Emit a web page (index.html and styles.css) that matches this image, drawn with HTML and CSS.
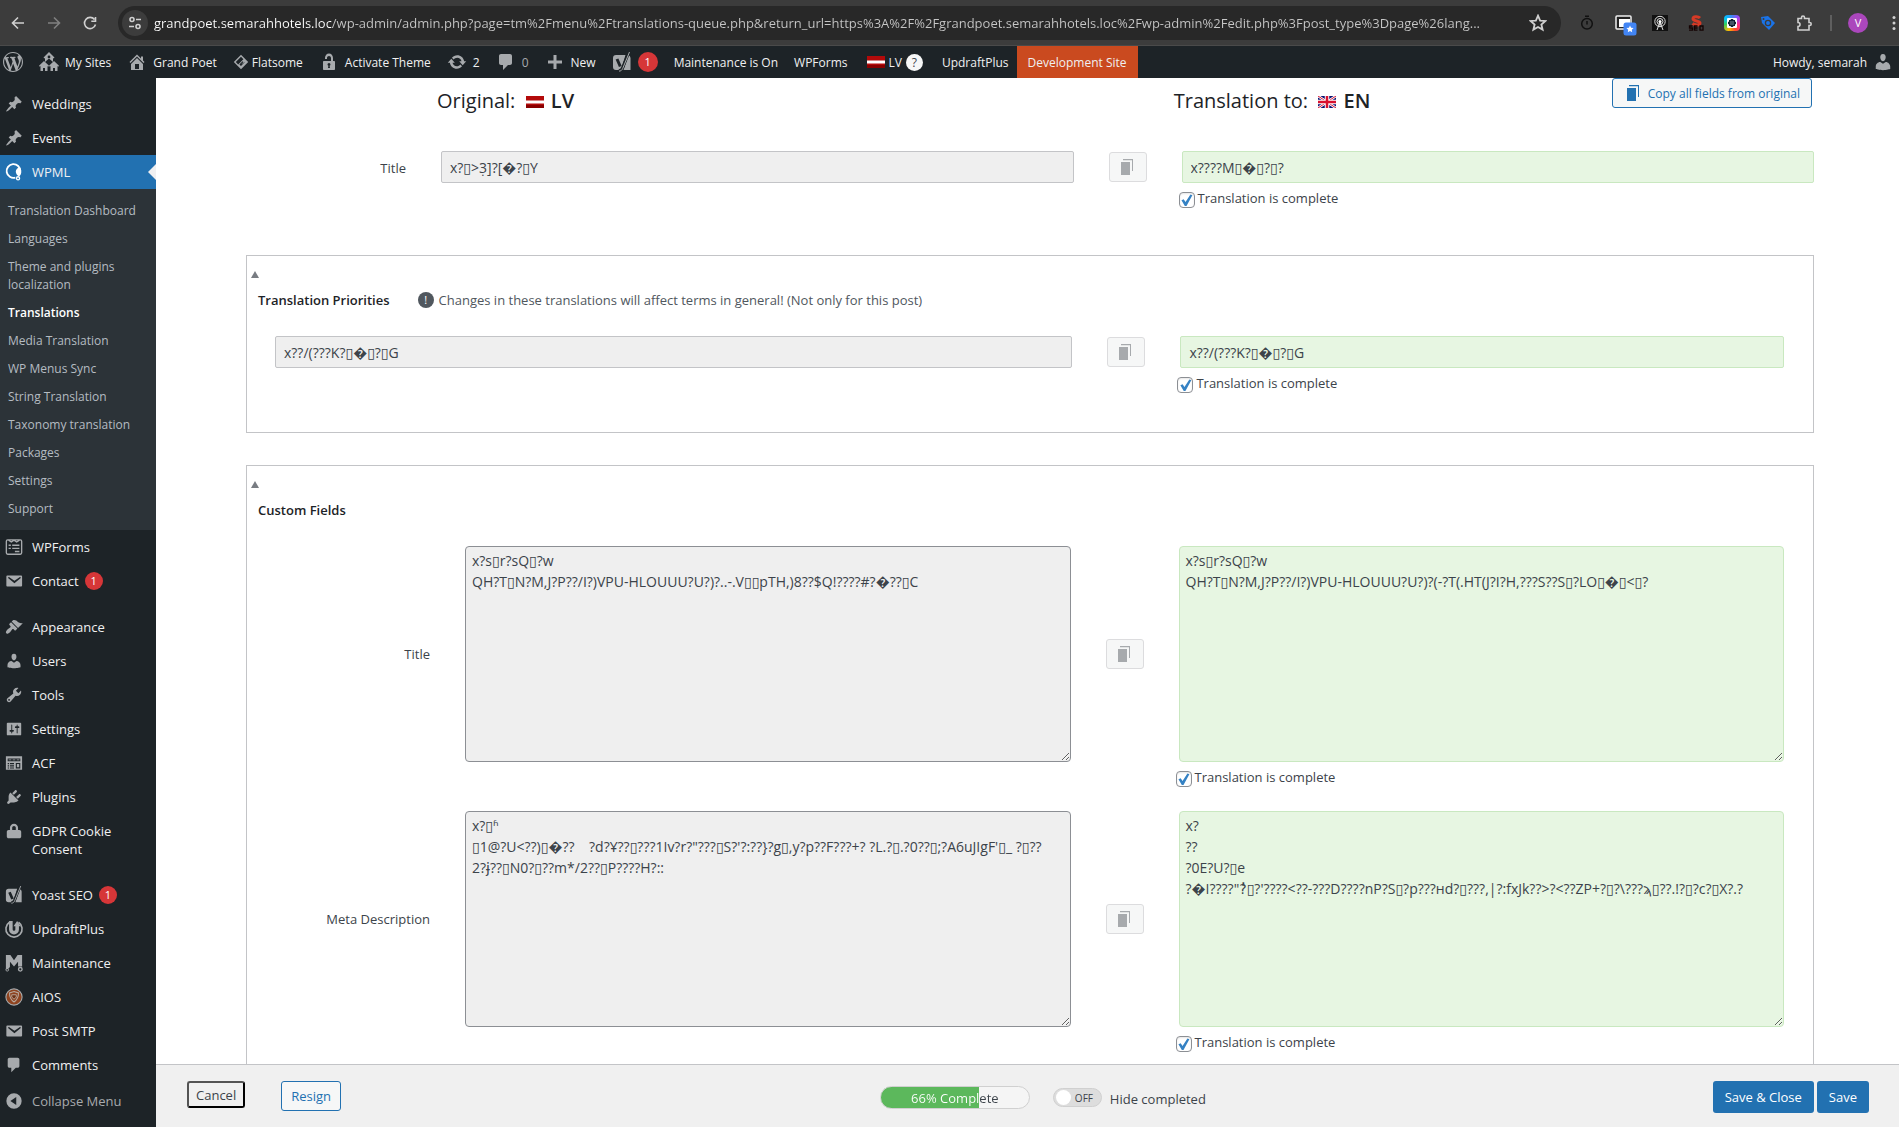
FILE: index.html
```html
<!DOCTYPE html>
<html lang="en">
<head>
    <meta charset="UTF-8">
    <meta name="viewport" content="width=device-width, initial-scale=1.0">
    <title>Translations</title>
    <link rel="stylesheet" href="styles.css">
</head>
<body>
    <svg class="sprite" aria-hidden="true">
        <symbol id="i-wp" viewBox="0 0 20 20"><path d="M20 10c0-5.51-4.49-10-10-10C4.48 0 0 4.49 0 10c0 5.52 4.48 10 10 10 5.51 0 10-4.48 10-10zM7.78 15.37L4.37 6.22c.55-.02 1.17-.08 1.17-.08.5-.06.44-1.13-.06-1.11 0 0-1.45.11-2.37.11-.18 0-.37 0-.58-.01C4.12 2.69 6.87 1.11 10 1.11c2.33 0 4.45.87 6.05 2.34-.68-.11-1.65.39-1.65 1.58 0 .74.45 1.36.9 2.1.35.61.55 1.36.55 2.46 0 1.49-1.4 5-1.4 5l-3.03-8.37c.54-.02.82-.17.82-.17.5-.05.44-1.25-.06-1.22 0 0-1.44.12-2.38.12-.87 0-2.33-.12-2.33-.12-.5-.03-.56 1.2-.06 1.22l.92.08 1.26 3.41zM17.41 10c.24-.64.74-1.87.43-4.25.7 1.29 1.05 2.71 1.05 4.25 0 3.29-1.73 6.24-4.4 7.78.97-2.59 1.94-5.2 2.92-7.78zM6.1 18.09C3.12 16.65 1.11 13.53 1.11 10c0-1.3.23-2.48.72-3.59C3.25 10.3 4.67 14.2 6.1 18.09zm4.03-6.63l2.58 6.98c-.86.29-1.76.45-2.71.45-.79 0-1.57-.11-2.29-.33.81-2.38 1.62-4.74 2.42-7.1z"/></symbol>
        <symbol id="i-sites" viewBox="0 0 20 20"><path fill-rule="evenodd" d="M10 0l5.500 5.500-1 1L14 6v4l-4-3.600L6 10V6l-.5.5-1-1zM10 3.500a1.400 1.400 0 1 0 0 2.800 1.400 1.400 0 0 0 0-2.800zM5 9l5 4.800-.9 1L8.500 14v5H6v-3H4v3H1.500v-5l-.7.8-.8-1zM15 9l5 4.800-.8 1-.7-.8v5H16v-3h-2v3h-2.500v-5l-.6.8-.9-1z"/></symbol>
        <symbol id="i-home" viewBox="0 0 20 20"><path fill-rule="evenodd" d="M16 8.500l1.530 1.530-1.060 1.060L10 4.600l-6.470 6.490-1.060-1.060L10 2.500l4 4v-2h2v4zm-6-2.460l6 5.990V18H4v-5.970zM12 17v-5H8v5h4z"/></symbol>
        <symbol id="i-unlock" viewBox="0 0 20 20"><path fill-rule="evenodd" d="M12 9V6c0-1.100-.9-2-2-2s-2 .9-2 2v1H6V6c0-2.500 1.790-4.500 4-4.500s4 2 4 4.500v3h1c.55 0 1 .45 1 1v7c0 .55-.45 1-1 1H5c-.55 0-1-.45-1-1v-7c0-.55.45-1 1-1zm-1 7l-.4-2.300c.6-.2.9-.7.9-1.200a1.500 1.500 0 0 0-3 0c0 .5.3 1 .9 1.200L9 16z"/></symbol>
        <symbol id="i-update" viewBox="0 0 20 20"><path d="M10.200 3.280c3.530 0 6.430 2.610 6.920 6h2.080l-3.500 4-3.500-4h2.320c-.45-1.970-2.210-3.450-4.320-3.450-1.450 0-2.730.71-3.540 1.780L4.950 5.660C6.230 4.200 8.110 3.280 10.200 3.280zm-.4 13.440c-3.520 0-6.430-2.610-6.920-6H.8l3.500-4c1.170 1.330 2.330 2.670 3.500 4H5.480c.45 1.970 2.210 3.450 4.320 3.450 1.450 0 2.730-.71 3.540-1.780l1.710 1.950c-1.280 1.460-3.150 2.380-5.250 2.380z"/></symbol>
        <symbol id="i-comment" viewBox="0 0 20 20"><path d="M5 2h9c1.100 0 2 .9 2 2v7c0 1.100-.9 2-2 2h-2l-5 5v-5H5c-1.100 0-2-.9-2-2V4c0-1.100.9-2 2-2z"/></symbol>
        <symbol id="i-plus" viewBox="0 0 20 20"><path d="M17 8.500v3h-5.500V17h-3v-5.500H3v-3h5.500V3h3v5.500z"/></symbol>
        <symbol id="i-flatsome" viewBox="0 0 20 20"><path d="M10 1l9 9-9 9-9-9zM10 3.500L3.500 10l3 3L13 6.500z" fill-rule="evenodd"/><path d="M10 13l3-3-1-1-4 4 2 2 5.500-5.500" fill="#1d2327"/></symbol>
        <symbol id="i-yoast" viewBox="0 0 20 20"><path d="M4 3h9.500L9 18H4a3 3 0 0 1-3-3V6a3 3 0 0 1 3-3zM16.500 3.300A3 3 0 0 1 18.500 6v12h-7z"/><path d="M5 7l3.300 7.500M17 0l-6.300 15.500c-.9 2.200-2 3.300-4 3.300" fill="none" stroke="#1d2327" stroke-width="3"/><path d="M17.500 0l-6.800 16.500c-.8 1.800-1.800 2.600-3.700 2.600" fill="none" stroke="currentColor" stroke-width="1"/></symbol>
        <symbol id="i-pin" viewBox="0 0 20 20"><path d="M10.440 3.020l1.820-1.820 6.360 6.350-1.830 1.820c-1.050-.68-2.480-.57-3.410.36l-.75.75c-.92.93-1.040 2.350-.35 3.410l-1.830 1.820-2.410-2.410-2.800 2.790c-.42.42-3.380 2.710-3.800 2.290s1.860-3.390 2.280-3.810l2.790-2.790L4.100 9.360l1.830-1.820c1.050.69 2.480.57 3.400-.36l.75-.75c.93-.92 1.050-2.350.36-3.410z"/></symbol>
        <symbol id="i-wpml" viewBox="0 0 20 20"><path fill="none" stroke="currentColor" stroke-width="2" d="M11.500 16.200A7.600 7.600 0 1 1 17 9"/><path d="M12 9.500c0-2.500 2-4.500 4.500-4.500 2.500 3.500 2 8-1 10-2-1-3.500-3-3.500-5.500z"/><circle cx="14.500" cy="17" r="1.700" fill="none" stroke="currentColor" stroke-width="1.500"/></symbol>
        <symbol id="i-wpforms" viewBox="0 0 20 20"><path fill="none" stroke="currentColor" stroke-width="1.500" d="M3 2h14a1.500 1.500 0 0 1 1.500 1.500v13A1.500 1.500 0 0 1 17 18H3a1.500 1.500 0 0 1-1.500-1.500v-13A1.500 1.500 0 0 1 3 2zM4 2.500l3 2 3-2 3 2 3-2M4 8h2.500M8 8h8M4 11.500h2.500M8 11.500h8M11 15h5"/></symbol>
        <symbol id="i-mail" viewBox="0 0 20 20"><path fill-rule="evenodd" d="M2.500 4H18c.6 0 1 .4 1 1v10c0 .6-.4 1-1 1H2.500c-.6 0-1-.4-1-1V5c0-.6.4-1 1-1zm7.990 8.600l6.740-5.530c.24-.2.43-.66.13-1.070-.29-.41-.82-.42-1.170-.17l-5.700 3.860L4.800 5.830c-.35-.25-.88-.24-1.170.17-.3.41-.11.87.13 1.070z"/></symbol>
        <symbol id="i-brush" viewBox="0 0 20 20"><path d="M14.480 11.060L7.410 3.990l1.500-1.500c.5-.56 2.300-.47 3.510.32 1.210.8 1.430 1.280 2.910 2.100 1.180.64 2.450 1.260 4.450.85zm-.71.71L6.700 4.700 4.930 6.470c-.39.39-.39 1.020 0 1.410l1.060 1.060c.39.39.39 1.030 0 1.420-.6.6-1.430 1.110-2.210 1.690-.35.26-.7.53-1.010.84C1.430 14.230.4 16.080 1.400 17.070c.99 1 2.840-.03 4.180-1.360.31-.31.58-.66.85-1.020.57-.78 1.080-1.610 1.690-2.210.39-.39 1.020-.39 1.410 0l1.060 1.060c.39.39 1.020.39 1.410 0z"/></symbol>
        <symbol id="i-user" viewBox="0 0 20 20"><path d="M10 9.250c-2.270 0-2.730-3.440-2.730-3.440C7 4.020 7.820 2 9.970 2c2.160 0 2.980 2.020 2.710 3.810 0 0-.41 3.440-2.680 3.440zm0 2.570L12.720 10c2.390 0 4.520 2.330 4.520 4.530v2.490s-3.650 1.130-7.240 1.130c-3.650 0-7.240-1.130-7.240-1.130v-2.490c0-2.250 1.940-4.480 4.470-4.480z"/></symbol>
        <symbol id="i-tools" viewBox="0 0 20 20"><path fill-rule="evenodd" d="M16.680 9.770c-1.340 1.340-3.300 1.670-4.950.99l-5.410 6.520c-.99.99-2.590.99-3.580 0s-.99-2.590 0-3.570l6.520-5.420c-.68-1.650-.35-3.610.99-4.950 1.280-1.280 3.120-1.620 4.720-1.060l-2.890 2.890 2.820 2.820 2.860-2.870c.53 1.580.18 3.390-1.080 4.650zM3.810 16.210c.4.39 1.040.39 1.430 0 .4-.4.4-1.040 0-1.430-.39-.4-1.030-.4-1.430 0-.39.39-.39 1.030 0 1.430z"/></symbol>
        <symbol id="i-settings" viewBox="0 0 20 20"><path fill-rule="evenodd" d="M18 16V4c0-.55-.45-1-1-1H3c-.55 0-1 .45-1 1v12c0 .55.45 1 1 1h14c.55 0 1-.45 1-1zM8 11h1c.55 0 1 .45 1 1s-.45 1-1 1H8v1.500c0 .28-.22.5-.5.5s-.5-.22-.5-.5V13H6c-.55 0-1-.45-1-1s.45-1 1-1h1V5.500c0-.28.22-.5.5-.5s.5.22.5.5V11zm5-2h-1c-.55 0-1-.45-1-1s.45-1 1-1h1V5.500c0-.28.22-.5.5-.5s.5.22.5.5V7h1c.55 0 1 .45 1 1s-.45 1-1 1h-1v5.500c0 .28-.22.5-.5.5s-.5-.22-.5-.5V9z"/></symbol>
        <symbol id="i-acf" viewBox="0 0 20 20"><path fill-rule="evenodd" d="M1 2.500h18v15H1zM3 5v3h14V5zM4 6h3v1H4zm4.500 0h3v1h-3zM13 6h3v1h-3zM3 10h1.500v1.500H3zm2.500 0H10v1.500H5.500zM3 12.500h1.500V14H3zm2.500 0H10V14H5.500zM3 15h1.500v1.200H3zm2.500 0H10v1.200H5.500zM12 10v6h5v-6zm1.200 1.200h2.600v3.600h-2.600z"/></symbol>
        <symbol id="i-plug" viewBox="0 0 20 20"><path d="M13.110 4.360L9.870 7.600 8 5.730l3.240-3.240c.35-.34 1.050-.2 1.560.32.52.51.66 1.210.31 1.550zm-8 1.770l.91-1.120 9.010 9.010-1.190.84c-.71.71-2.630 1.160-3.820 1.160H6.140L4.900 17.260c-.59.59-1.540.59-2.120 0-.59-.58-.59-1.530 0-2.120l1.240-1.240v-3.880c0-1.130.4-3.190 1.090-3.890zm7.260 3.970l3.240-3.240c.34-.35 1.040-.21 1.550.31.52.51.66 1.210.31 1.550l-3.240 3.250z"/></symbol>
        <symbol id="i-lock" viewBox="0 0 20 20"><path fill-rule="evenodd" d="M14.500 9H16c1.100 0 2 .9 2 2v5c0 1.100-.9 2-2 2H4c-1.100 0-2-.9-2-2v-5c0-1.100.9-2 2-2h1.500V6.500C5.500 4 7.500 2 10 2s4.500 2 4.500 4.500zM12 9V6.500c0-1.100-.9-2-2-2s-2 .9-2 2V9z"/></symbol>
        <symbol id="i-updraft" viewBox="0 0 20 20"><path fill="none" stroke="currentColor" stroke-width="1.800" d="M5 2.500a9 9 0 1 0 10 0"/><path fill="none" stroke="currentColor" stroke-width="4" d="M6.500 1v9.500a3.500 3.500 0 0 0 7 0V6"/><path d="M9.500 7l4-6 4 6z"/></symbol>
        <symbol id="i-maint" viewBox="0 0 20 20"><path d="M1 1h5l4 6 4-6h5v13h-4.500V8.500L10 14 5.500 8.500v6L3 17H1z"/><circle cx="2.500" cy="17.500" r="1.500" fill="none" stroke="currentColor"/><circle cx="17" cy="17" r="2" fill="none" stroke="currentColor" stroke-width="1.500"/></symbol>
        <symbol id="i-aios" viewBox="0 0 20 20"><circle cx="10" cy="10" r="9" fill="#8f4420" stroke="#a7aaad" stroke-width="1.200"/><path fill="none" stroke="#b9a99f" stroke-width="1.200" d="M10 4l5 1.500c0 5-1.500 7.500-5 10-3.500-2.500-5-5-5-10z"/><path fill="#6d3114" stroke="#b9a99f" d="M7.500 7.500h5v2.500L10 12.500 7.500 10z"/></symbol>
        <symbol id="i-collapse" viewBox="0 0 20 20"><path fill-rule="evenodd" d="M10 1.500a8.500 8.500 0 1 1 0 17 8.500 8.500 0 0 1 0-17zM12.500 5.500L6 10l6.500 4.500z"/></symbol>
        <symbol id="i-copy" viewBox="0 0 20 20"><path d="M3 5h9v13H3zM5 2h10v12h-1V3.200H5z"/></symbol>
        <symbol id="f-lv" viewBox="0 0 18 12"><path fill="#b30a0a" d="M0 0h18v12H0z"/><path fill="#8a0000" d="M0 9h18v3H0z"/><path fill="#fff" d="M0 4.500h18v3H0z"/></symbol>
        <symbol id="f-en" viewBox="0 0 18 12"><path fill="#0a1172" d="M0 0h18v12H0z"/><path stroke="#fff" stroke-width="2.600" d="M0 0l18 12M18 0L0 12"/><path stroke="#d8102e" stroke-width="1" d="M0 0l18 12M18 0L0 12"/><path stroke="#fff" stroke-width="4.500" d="M9 0v12M0 6h18"/><path stroke="#d8102e" stroke-width="2.500" d="M9 0v12M0 6h18"/></symbol>
    </svg>

    <div class="browser">
        <button class="nav-btn" aria-label="Back"><svg viewBox="0 0 16 16"><path d="M14 8H3M8 2.500L2.500 8 8 13.500"/></svg></button>
        <button class="nav-btn dim" aria-label="Forward"><svg viewBox="0 0 16 16"><path d="M2 8h11M8 2.500L13.500 8 8 13.500"/></svg></button>
        <button class="nav-btn" aria-label="Reload"><svg viewBox="0 0 16 16"><path d="M13.500 9.500A5.600 5.600 0 1 1 12.500 4.500M13.500 2v4.200H9.300"/></svg></button>
        <div class="omnibox">
            <button class="site-info" aria-label="Site information"><svg viewBox="0 0 16 16"><circle cx="5" cy="4.500" r="2"/><path d="M9 4.500h5M2 11.500h5"/><circle cx="11" cy="11.500" r="2"/></svg></button>
            <input class="url" type="text" aria-label="Address" value="grandpoet.semarahhotels.loc/wp-admin/admin.php?page=tm%2Fmenu%2Ftranslations-queue.php&amp;return_url=https%3A%2F%2Fgrandpoet.semarahhotels.loc%2Fwp-admin%2Fedit.php%3Fpost_type%3Dpage%26lang...">
            <button class="star" aria-label="Bookmark"><svg viewBox="0 0 16 16"><path d="M8 1.500l1.900 4.300 4.700.4-3.600 3.100 1.100 4.600L8 11.500l-4.100 2.400L5 9.300 1.400 6.200l4.700-.4z"/></svg></button>
        </div>
        <div class="extensions">
            <svg viewBox="0 0 16 16"><path fill="none" stroke="#111" stroke-width="1.500" d="M8 3.500a5.300 5.300 0 1 1 0 10.600A5.300 5.300 0 0 1 8 3.500zM6 1.200h4M8 6v3.500"/></svg>
            <svg class="wide" viewBox="0 0 22 22"><rect x="1" y="2" width="15" height="13" rx="1" fill="#222" stroke="#eee" stroke-width="1.500"/><path fill="#fff" d="M4 5h11v8H4z"/><rect x="8.500" y="8.500" width="13" height="13" rx="2.500" fill="#4285f4"/><path fill="#fff" d="M15 11.500l1.100 2.300 2.500.3-1.800 1.700.4 2.500-2.200-1.200-2.200 1.200.4-2.500-1.800-1.700 2.500-.3z"/></svg>
            <svg viewBox="0 0 16 16"><path fill="#111" d="M0 0h16v16H0z"/><g fill="none" stroke="#ddd"><circle cx="8" cy="6.500" r="5.200"/><circle cx="8" cy="6.500" r="3"/><path d="M8 7l-3 8M8 7l3 8M6.500 11h3"/></g><circle cx="8" cy="6.500" r="1.500" fill="#fff"/></svg>
            <svg viewBox="0 0 16 16"><path fill="none" stroke="#d63a26" stroke-width="3" d="M12 3C10 1 5 1.200 5 3.800S12 5.500 12 8s-5 2.500-7.500.5"/><path fill="none" stroke="#150303" stroke-width="1.300" d="M4.500 11H1.500v2h3v2.200H1M9.500 11h-3v4.200h3M6.500 13h3M12 11h3v4.200h-3z"/></svg>
            <span class="ext-cam"></span>
            <svg viewBox="0 0 16 16"><path fill="#1a73e8" d="M1 2l7-1 7 7-6 7-7-7z"/><circle cx="8" cy="8" r="2.600" fill="none" stroke="#3c3c3c" stroke-width="1.300"/><circle cx="3.500" cy="4" r="1" fill="#3c3c3c"/></svg>
            <svg viewBox="0 0 16 16"><path fill="none" stroke="#d0d0d0" stroke-width="1.600" d="M2 3.500h3.500V2.500a1.500 1.500 0 0 1 3 0v1H13v4h.7a1.500 1.500 0 0 1 0 3H13v4.500H2v-3.500a2 2 0 0 0 0-4z"/></svg>
        </div>
        <span class="divider"></span>
        <button class="profile">V</button>
        <button class="dots" aria-label="Menu"><svg viewBox="0 0 4 16"><circle cx="2" cy="2.500" r="1.500"/><circle cx="2" cy="8" r="1.500"/><circle cx="2" cy="13.500" r="1.500"/></svg></button>
    </div>

    <nav class="adminbar">
        <a href="#" aria-label="About WordPress"><svg class="icon"><use href="#i-wp"/></svg></a>
        <a href="#"><svg class="icon"><use href="#i-sites"/></svg>My Sites</a>
        <a href="#"><svg class="icon"><use href="#i-home"/></svg>Grand Poet</a>
        <a class="tight" href="#"><svg class="icon small"><use href="#i-flatsome"/></svg>Flatsome</a>
        <a href="#"><svg class="icon"><use href="#i-unlock"/></svg>Activate Theme</a>
        <a href="#"><svg class="icon"><use href="#i-update"/></svg>2</a>
        <a class="muted" href="#"><svg class="icon"><use href="#i-comment"/></svg>0</a>
        <a href="#"><svg class="icon"><use href="#i-plus"/></svg>New</a>
        <a href="#"><svg class="icon"><use href="#i-yoast"/></svg><span class="badge">1</span></a>
        <a href="#">Maintenance is On</a>
        <a href="#">WPForms</a>
        <a class="lang" href="#"><svg class="flag"><use href="#f-lv"/></svg>LV<span class="help">?</span></a>
        <a href="#">UpdraftPlus</a>
        <a class="dev" href="#">Development Site</a>
        <a class="howdy" href="#">Howdy, semarah<svg class="icon"><use href="#i-user"/></svg></a>
    </nav>

    <div class="wrap">
        <aside class="sidebar">
            <a class="item" href="#"><svg class="icon"><use href="#i-pin"/></svg>Weddings</a>
            <a class="item" href="#"><svg class="icon"><use href="#i-pin"/></svg>Events</a>
            <a class="item current" href="#"><svg class="icon"><use href="#i-wpml"/></svg>WPML</a>
            <div class="submenu">
                <a href="#">Translation Dashboard</a>
                <a href="#">Languages</a>
                <a href="#">Theme and plugins localization</a>
                <a class="active" href="#">Translations</a>
                <a href="#">Media Translation</a>
                <a href="#">WP Menus Sync</a>
                <a href="#">String Translation</a>
                <a href="#">Taxonomy translation</a>
                <a href="#">Packages</a>
                <a href="#">Settings</a>
                <a href="#">Support</a>
            </div>
            <a class="item" href="#"><svg class="icon"><use href="#i-wpforms"/></svg>WPForms</a>
            <a class="item" href="#"><svg class="icon"><use href="#i-mail"/></svg>Contact<span class="badge">1</span></a>
            <a class="item first" href="#"><svg class="icon"><use href="#i-brush"/></svg>Appearance</a>
            <a class="item" href="#"><svg class="icon"><use href="#i-user"/></svg>Users</a>
            <a class="item" href="#"><svg class="icon"><use href="#i-tools"/></svg>Tools</a>
            <a class="item" href="#"><svg class="icon"><use href="#i-settings"/></svg>Settings</a>
            <a class="item" href="#"><svg class="icon"><use href="#i-acf"/></svg>ACF</a>
            <a class="item" href="#"><svg class="icon"><use href="#i-plug"/></svg>Plugins</a>
            <a class="item" href="#"><svg class="icon"><use href="#i-lock"/></svg>GDPR Cookie Consent</a>
            <a class="item first" href="#"><svg class="icon"><use href="#i-yoast"/></svg>Yoast SEO<span class="badge">1</span></a>
            <a class="item" href="#"><svg class="icon"><use href="#i-updraft"/></svg>UpdraftPlus</a>
            <a class="item" href="#"><svg class="icon"><use href="#i-maint"/></svg>Maintenance</a>
            <a class="item" href="#"><svg class="icon"><use href="#i-aios"/></svg>AIOS</a>
            <a class="item" href="#"><svg class="icon"><use href="#i-mail"/></svg>Post SMTP</a>
            <a class="item" href="#"><svg class="icon"><use href="#i-comment"/></svg>Comments</a>
            <button class="item collapse"><svg class="icon"><use href="#i-collapse"/></svg>Collapse Menu</button>
        </aside>

        <div class="content">
            <main class="editor">
                <header class="editor-head">
                    <h2>Original: <svg class="flag"><use href="#f-lv"/></svg> <b>LV</b></h2>
                    <h2>Translation to: <svg class="flag"><use href="#f-en"/></svg> <b>EN</b></h2>
                    <button class="btn copy-all"><svg class="icon"><use href="#i-copy"/></svg>Copy all fields from original</button>
                </header>

                <div class="row">
                    <label class="name" for="title-orig">Title</label>
                    <input id="title-orig" class="field" type="text" readonly value="x?▯&gt;3̣]?[�?▯Y">
                    <button class="copy" aria-label="Copy from original"><svg class="icon"><use href="#i-copy"/></svg></button>
                    <div>
                        <input class="field done" type="text" aria-label="Title translation" value="x????M▯�▯?▯?">
                        <label class="complete"><input type="checkbox" checked>Translation is complete</label>
                    </div>
                </div>

                <section class="box">
                    <button class="toggle" aria-label="Toggle panel"></button>
                    <h3>Translation Priorities <span class="note"><i>!</i>Changes in these translations will affect terms in general! (Not only for this post)</span></h3>
                    <div class="row no-label">
                        <input class="field" type="text" readonly aria-label="Original term" value="x??/(???K?▯�▯?▯G">
                        <button class="copy" aria-label="Copy from original"><svg class="icon"><use href="#i-copy"/></svg></button>
                        <div>
                            <input class="field done" type="text" aria-label="Term translation" value="x??/(???K?▯�▯?▯G">
                            <label class="complete"><input type="checkbox" checked>Translation is complete</label>
                        </div>
                    </div>
                </section>

                <section class="box">
                    <button class="toggle" aria-label="Toggle panel"></button>
                    <h3>Custom Fields</h3>
                    <div class="row tall">
                        <label class="name" for="cf-title">Title</label>
                        <textarea id="cf-title" class="field" readonly>x?s▯r?sQ▯?w
QH?T▯N?M,J?P??/I?)VPU-HLOUUU?U?)?..-.V▯▯pTH,)8??$Q!????#?�??▯C</textarea>
                        <button class="copy" aria-label="Copy from original"><svg class="icon"><use href="#i-copy"/></svg></button>
                        <div>
                            <textarea class="field done" aria-label="Title translation">x?s▯r?sQ▯?w
QH?T▯N?M,J?P??/I?)VPU-HLOUUU?U?)?(-?T(.HT(J?I?H,???S??S▯?LO▯�▯&lt;▯?</textarea>
                            <label class="complete"><input type="checkbox" checked>Translation is complete</label>
                        </div>
                    </div>
                    <div class="row tall">
                        <label class="name" for="cf-desc">Meta Description</label>
                        <textarea id="cf-desc" class="field" readonly>x?▯ʱ
▯1@?U&lt;??)▯�??    ?d?Ұ??▯???1Iv?r?"???▯S?'?:??}?g▯,y?p??F???+? ?L.?▯.?0??▯;?A6uJIgF'▯_ ?▯??
2?ɉ??▯N0?▯??m*/2??▯P????H?::</textarea>
                        <button class="copy" aria-label="Copy from original"><svg class="icon"><use href="#i-copy"/></svg></button>
                        <div>
                            <textarea class="field done" aria-label="Meta Description translation">x?
??
?0E?U?▯e
?�I????"?̓▯?'????&lt;??-???D????nP?S▯?p???нd?▯???,|?:fxJk??&gt;?&lt;??ZP+?▯?\???ϡ▯??.!?▯?c?▯X?.?</textarea>
                            <label class="complete"><input type="checkbox" checked>Translation is complete</label>
                        </div>
                    </div>
                </section>
            </main>

            <footer class="actions">
                <button class="cancel">Cancel</button>
                <button class="btn resign">Resign</button>
                <div class="status">
                    <div class="progress" role="progressbar" aria-valuenow="66"><span>66% Complete</span></div>
                    <label class="switch"><input type="checkbox"><span>OFF</span>Hide completed</label>
                </div>
                <button class="primary">Save &amp; Close</button>
                <button class="primary">Save</button>
            </footer>
        </div>
    </div>
</body>
</html>
```
FILE: styles.css
```css
* {
    box-sizing: border-box;
}

body {
    margin: 0;
    height: 100vh;
    overflow: hidden;
    display: flex;
    flex-direction: column;
    font-family: "Segoe UI", "Open Sans", "DejaVu Sans", sans-serif;
    font-size: 13px;
    color: #3c434a;
    background: #fff;
}

button,
input,
textarea {
    font: inherit;
    color: inherit;
}

button {
    padding: 0;
    border: none;
    background: none;
    cursor: pointer;
}

a {
    color: inherit;
    text-decoration: none;
}

.sprite {
    position: absolute;
    width: 0;
    height: 0;
}

.icon {
    width: 20px;
    height: 20px;
    flex: none;
    fill: currentColor;
}

.flag {
    width: 18px;
    height: 12px;
    flex: none;
}

/* browser bar */
.browser {
    flex: none;
    height: 46px;
    display: flex;
    align-items: center;
    padding: 0 3px 0 10px;
    background: #3c3c3c;
    border-bottom: 1px solid #4a4a4a;
    color: #d0d0d0;
}

.nav-btn {
    width: 16px;
    height: 16px;
    margin-right: 20px;
}

.browser button svg {
    display: block;
    width: 100%;
    height: 100%;
    fill: none;
    stroke: currentColor;
    stroke-width: 1.6;
}

.nav-btn.dim {
    color: #808080;
}

.omnibox {
    flex: 1;
    height: 34px;
    margin-right: 18px;
    padding: 0 14px 0 4px;
    display: flex;
    align-items: center;
    border-radius: 17px;
    background: #282828;
}

.site-info {
    width: 26px;
    height: 26px;
    padding: 5px;
    border-radius: 50%;
    background: #3c3c3c;
}

/* host part is brighter than the path */
.url {
    flex: 1;
    min-width: 0;
    padding: 0;
    margin: 0 16px 0 6px;
    border: none;
    color: transparent;
    background: linear-gradient(to right, #fff 177px, #c7c7c7 177px);
    background-clip: text;
}

.star {
    width: 18px;
    height: 18px;
}

.extensions {
    display: flex;
    align-items: center;
    gap: 20px;
}

.extensions svg {
    width: 16px;
    height: 16px;
}

.extensions svg.wide {
    width: 22px;
    height: 22px;
    margin: 4px -5px 0 0;
}

.ext-cam {
    width: 16px;
    height: 16px;
    border-radius: 4px;
    border: 3px solid transparent;
    background: radial-gradient(#456 30%, #123 32%, #123 50%, #fff 55%) padding-box,
        conic-gradient(#4285f4, #a142f4, #ff2d87, #ff4b2b, #fbbc04, #34d058, #00c2ff, #4285f4) border-box;
}

.divider {
    width: 2px;
    height: 16px;
    margin: 0 16px 0 18px;
    background: #5f5f5f;
}

.profile {
    width: 20px;
    height: 20px;
    border-radius: 50%;
    background: #ab47bc;
    color: #fff;
    font-size: 11px;
    line-height: 20px;
}

.browser .dots {
    width: 4px;
    height: 16px;
    margin-left: 24px;
}

.browser .dots svg {
    fill: currentColor;
    stroke: none;
}

/* admin bar */
.adminbar {
    flex: none;
    height: 32px;
    display: flex;
    padding-left: 3px;
    background: #1d2327;
    color: #f0f0f1;
    font-size: 12px;
    white-space: nowrap;
}

.adminbar a {
    display: flex;
    align-items: center;
    gap: 6px;
    padding: 0 8px;
}

.adminbar a:first-child {
    padding-left: 0;
}

.adminbar .icon {
    color: #a7aaad;
}

.adminbar .tight {
    gap: 3px;
}

.adminbar .icon.small {
    width: 16px;
    height: 16px;
}

.adminbar .muted {
    color: #a7aaad;
}

.adminbar .lang {
    gap: 4px;
    padding: 0 11px;
}

.adminbar .dev {
    padding: 0 11px;
    background: #ca4a1f;
}

.adminbar .howdy {
    margin-left: auto;
    padding-right: 6px;
}

.badge {
    min-width: 18px;
    height: 18px;
    border-radius: 9px;
    background: #d63638;
    color: #fff;
    font-size: 11px;
    line-height: 18px;
    text-align: center;
}

.adminbar .badge {
    min-width: 20px;
    height: 20px;
    border-radius: 10px;
    line-height: 20px;
}

.help {
    width: 17px;
    height: 17px;
    border-radius: 50%;
    background: #f6f7f7;
    color: #3c434a;
    font-size: 12px;
    line-height: 17px;
    text-align: center;
}

/* sidebar */
.wrap {
    flex: 1;
    min-height: 0;
    display: flex;
}

.sidebar {
    flex: none;
    width: 156px;
    padding-top: 9px;
    overflow: hidden;
    background: #1d2327;
    color: #f0f0f1;
}

.item {
    position: relative;
    width: 100%;
    display: flex;
    gap: 8px;
    padding: 8px 8px 8px 4px;
    line-height: 18px;
    text-align: left;
}

.item .icon {
    height: 18px;
    color: #a7aaad;
}

.item.first {
    margin-top: 12px;
}

.item.current {
    background: #2271b1;
}

.item.current .icon {
    color: #fff;
}

/* little arrow pointing at the open screen */
.item.current::after {
    content: "";
    position: absolute;
    right: 0;
    top: 9px;
    border: 8px solid transparent;
    border-left: none;
    border-right-color: #f0f0f1;
}

.item .badge {
    margin-left: -2px;
}

.item.collapse {
    margin-top: 2px;
    color: #a7aaad;
}

.submenu {
    padding: 8px 0 7px;
    background: #2c3338;
    color: #b5bcc2;
    font-size: 12px;
}

.submenu a {
    display: block;
    padding: 5px 8px;
    line-height: 18px;
}

.submenu .active {
    color: #fff;
    font-weight: 600;
}

/* editor */
.content {
    flex: 1;
    min-width: 0;
    display: flex;
    flex-direction: column;
}

.editor {
    flex: 1;
    min-height: 0;
    overflow: hidden;
    padding: 0 85px 0 90px;
}

.editor-head {
    display: grid;
    grid-template-columns: 735fr 437fr auto;
    align-items: start;
    height: 73px;
    padding: 0 2px 0 191px;
}

h2 {
    margin: 0;
    padding-top: 9px;
    font-size: 20px;
    font-weight: 400;
    line-height: 28px;
    color: #1d2327;
}

h2 b {
    font-weight: 600;
}

h2 .flag {
    margin: 0 2px 0 5px;
}

.btn {
    height: 30px;
    border: 1px solid #2271b1;
    border-radius: 3px;
    background: #f6f7f7;
    color: #2271b1;
}

.copy-all {
    display: flex;
    align-items: center;
    gap: 4px;
    padding: 0 11px;
    font-size: 12px;
}

.row {
    display: grid;
    grid-template-columns: 160px 1fr 38px 1fr;
    column-gap: 35px;
    align-items: start;
}

.name {
    line-height: 34px;
    text-align: right;
}

.field {
    display: block;
    width: 100%;
    height: 32px;
    padding: 0 8px;
    border: 1px solid #c3c4c7;
    border-radius: 2px;
    background: #efefef;
    font-size: 14px;
}

.field.done {
    background: #e7f6e2;
    border-color: #c9e8c0;
}

.copy {
    height: 30px;
    margin-top: 1px;
    border: 1px solid #dcdcde;
    border-radius: 3px;
    background: #f6f7f7;
    color: #a7aaad;
}

.copy .icon {
    display: block;
    margin: auto;
}

.complete {
    display: flex;
    gap: 3px;
    margin: 7px 0 0 -3px;
    line-height: 16px;
}

.complete input {
    appearance: none;
    width: 16px;
    height: 16px;
    margin: 2px 0 0;
    border: 1px solid #8c8f94;
    border-radius: 4px;
    background: #fff;
    box-shadow: inset 0 1px 2px rgba(0, 0, 0, 0.1);
}

.complete input:checked::before {
    content: "";
    display: block;
    width: 14px;
    height: 14px;
    background: #3582c4;
    clip-path: polygon(14% 52%, 30% 44%, 43% 64%, 78% 10%, 92% 16%, 50% 92%, 38% 92%);
}

.box {
    height: 178px;
    margin-bottom: 32px;
    padding: 15px 29px 0 28px;
    border: 1px solid #c3c4c7;
}

.row + .box {
    margin-top: 47px;
}

.box:last-child {
    height: auto;
}

.toggle {
    display: block;
    width: 0;
    margin-left: -24px;
    border: 4px solid transparent;
    border-top: none;
    border-bottom: 7px solid #787c82;
}

h3 {
    display: flex;
    gap: 28px;
    margin: 11px 0 25px -17px;
    font-size: 13px;
    font-weight: 600;
    line-height: 22px;
    color: #1d2327;
}

.note {
    display: flex;
    align-items: center;
    gap: 5px;
    font-weight: 400;
    color: #50575e;
}

.note i {
    width: 16px;
    height: 16px;
    border-radius: 50%;
    background: #50575e;
    color: #fff;
    font-size: 11px;
    font-style: normal;
    line-height: 16px;
    text-align: center;
}

.row.no-label {
    grid-template-columns: 798fr 38px 604fr;
}

.row.tall {
    grid-template-columns: 155px 1fr 38px 1fr;
    margin-bottom: 24px;
}

.tall textarea {
    height: 216px;
    padding: 3px 6px;
    border-color: #8c8f94;
    border-radius: 4px;
    line-height: 21px;
    resize: both;
}

.tall .done {
    border-color: #c9e8c0;
}

.tall .name {
    line-height: 216px;
}

.tall .copy {
    margin-top: 93px;
}

/* bottom bar */
.actions {
    flex: none;
    height: 63px;
    display: flex;
    align-items: flex-start;
    gap: 3px;
    padding: 16px 30px 0 31px;
    border-top: 1px solid #c3c4c7;
    background: #f0f0f0;
}

.cancel {
    padding: 0 7px;
    height: 27px;
    border: 2px outset #000;
    border-radius: 3px;
}

.resign {
    margin-left: 33px;
    padding: 0 9px;
}

.status {
    flex: 1;
    display: flex;
    justify-content: center;
    gap: 23px;
    padding: 5px 0 0 32px;
}

.progress {
    width: 150px;
    height: 23px;
    border: 1px solid #d0d0d0;
    border-radius: 12px;
    background: linear-gradient(to right, #5cb85c 66%, #f5f5f5 66%);
}

.progress span {
    display: block;
    line-height: 23px;
    text-align: center;
    color: transparent;
    background: linear-gradient(to right, #fff 66%, #3c434a 66%);
    background-clip: text;
}

.switch {
    display: flex;
    gap: 8px;
    line-height: 26px;
}

.switch input {
    position: absolute;
    opacity: 0;
}

.switch span {
    display: flex;
    align-items: center;
    gap: 4px;
    width: 49px;
    height: 19px;
    margin-top: 2px;
    padding: 0 2px;
    border: 1px solid #d0d0d0;
    border-radius: 10px;
    background: #ddd;
    font-size: 10px;
}

.switch span::before {
    content: "";
    width: 15px;
    height: 15px;
    border-radius: 50%;
    background: #fff;
}

.primary {
    height: 32px;
    padding: 0 12px;
    border-radius: 3px;
    background: #2271b1;
    color: #fff;
}
```
